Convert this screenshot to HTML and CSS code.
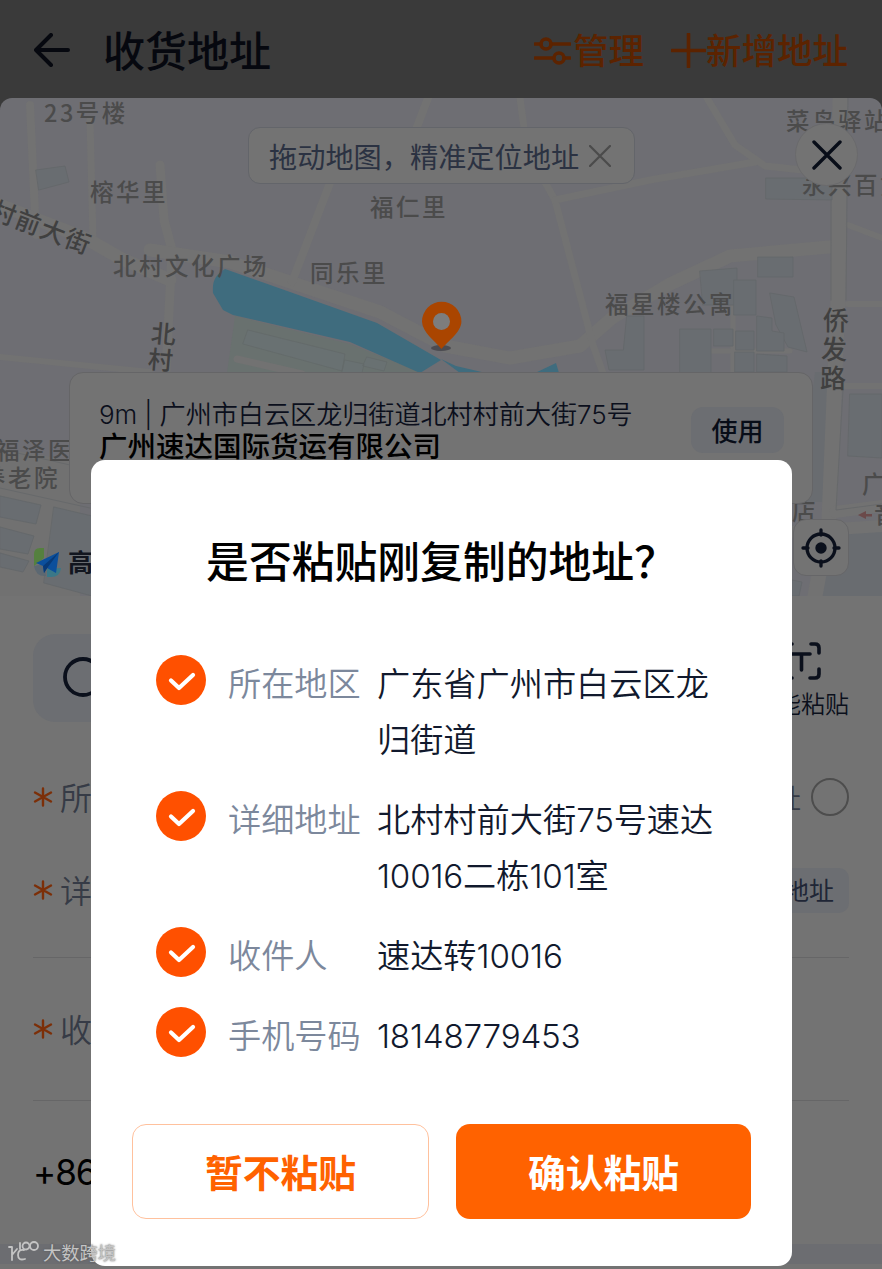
FILE: index.html
```html
<!DOCTYPE html>
<html lang="zh-CN">

<head>
    <meta charset="UTF-8">
    <title>收货地址</title>
    <link rel="stylesheet" href="styles.css">
</head>

<body>
    <div class="page">
        <header class="header">
            <svg class="back" viewBox="0 0 36 34"><path d="M17 2 2 17l15 15M2 17h32"/></svg>
            <h1>收货地址</h1>
            <div class="action">
                <svg class="icon-set" viewBox="0 0 37 30"><path d="M1 8h6M17 8h19M1 22h18M30 22h6"/><circle cx="12" cy="8" r="5"/><circle cx="25" cy="22" r="5"/></svg>
                <span>管理</span>
            </div>
            <div class="action add">
                <svg class="icon-add" viewBox="0 0 35 35"><path d="M17.500 1v33M1 17.500h33"/></svg>
                <span>新增地址</span>
            </div>
        </header>

        <div class="map">
            <svg class="map-bg" viewBox="0 98 882 498">
                <rect class="land" x="0" y="98" width="882" height="498"/>
                <path class="ground" d="M0 448 80 462V596H0z"/>
                <path class="area" d="M815 372h18l-8 130-25 0z M870 525l12-2v73H812l8-50z"/>
                <g class="road">
                    <path d="M30 105 36 235" stroke-width="8"/>
                    <path d="M90 120 93 240" stroke-width="7"/>
                    <path d="M160 165 164 220 172 250 166 372" stroke-width="9"/>
                    <path d="M0 205 85 238 120 258 170 280" stroke-width="13"/>
                    <path d="M150 250 230 262 380 312 445 346 510 358 580 346 612 318 670 284 730 256 840 246" stroke-width="13"/>
                    <path d="M840 98 838 300 829 520 815 596" stroke-width="15"/>
                    <path d="M520 98 527 150 555 200 593 345 604 376" stroke-width="7"/>
                    <path d="M555 200 650 180 755 162M707 98 735 145 765 166 840 174" stroke-width="7"/>
                    <path d="M428 98 412 140M330 183 292 282" stroke-width="8"/>
                    <path d="M0 357 150 372" stroke-width="6"/>
                    <path d="M848 225 882 238M848 304H882M845 386H882" stroke-width="6"/>
                    <path d="M733 300V372M690 351H790" stroke-width="5"/>
                    <path d="M835 512 882 506M790 532 882 526" stroke-width="12"/>
                </g>
                <g class="house">
                    <path d="M36 170 65 166 69 182 39 190z"/>
                    <path d="M766 178h66v22l-66-1z"/>
                    <path d="M758 257h35v20h-35z"/>
                    <path d="M700 271 737 268V305H703z"/>
                    <path d="M734 280h22v35h-22z"/>
                    <path d="M770 293 794 297 807 352 788 347 776 325z"/>
                    <path d="M627 316h17v54h-35l-4-20h18z"/>
                    <path d="M680 329h31v45h-31zM714 329h19v17h-19zM736 331h18v19h-18zM757 316l15 2v13l12 2v18h-27zM735 352h19v20h-19zM757 354l30 2v16h-30z"/>
                    <path d="M850 394h32v64l-34-2z"/>
                    <path d="M0 496 41 505 36 524 0 517zM0 527 34 536 28 554 0 549zM0 553 29 561 23 572 0 567z"/>
                    <path d="M54 507 92 516V596L44 583z"/>
                    <path d="M792 580 802 582 799 596H792z"/>
                </g>
                <path class="edge" d="M848 98 846 300M831 200V300M843 390 836 510 882 504M793 578 M0 488 90 508M0 449 92 470"/>
                <path class="green" d="M235 316 350 344 422 373H227z"/>
                <path class="lot" d="M248 330 345 354 342 371 243 344zM345 360 364 364 362 373H342zM367 357 387 362 384 371 363 366z"/>
                <path class="road" d="M237 359 302 374" stroke-width="7"/>
                <path class="water" d="M225 269C216 275 212 280 213 293L223 310 233 315 350 342 420 373 441 360 377 323 290 292z"/>
                <path class="water" d="M441 359 456 366 486 373H460zM535 373 556 363 559 373z"/>

                <g class="place">
                    <text x="44" y="122">23号楼</text>
                    <text x="90" y="201">榕华里</text>
                    <text x="370" y="216">福仁里</text>
                    <text x="113" y="275">北村文化广场</text>
                    <text x="310" y="282">同乐里</text>
                    <text x="605" y="313">福星楼公寓</text>
                    <text x="786" y="130">菜鸟驿站</text>
                    <text x="802" y="194">永兴百货</text>
                    <text x="-4" y="459">福泽医</text>
                    <text x="-18" y="487">养老院</text>
                    <text x="792" y="520">店</text>
                    <text x="862" y="493">广</text>
                    <text x="874" y="523">音</text>
                </g>
                <g class="street">
                    <text transform="translate(3 213) rotate(21)" x="-12" y="9">村前大街</text>
                    <text x="151" y="343" transform="rotate(5 163 334)">北</text>
                    <text x="148" y="369" transform="rotate(5 160 360)">村</text>
                </g>
                <g class="street big">
                    <text x="823" y="330">侨</text>
                    <text x="821" y="359">发</text>
                    <text x="820" y="388">路</text>
                </g>
                <path class="way" d="M858 515 866 511V514H872V516.500H866V519z"/>

                <ellipse class="pin-shadow" cx="441" cy="348" rx="10" ry="3"/>
                <path class="pin" d="M441.500 349C435 341 422 332 422 321.500A19.700 19.700 0 0 1 461.400 321.500C461.400 332 448 341 441.500 349z"/>
                <circle class="pin-hole" cx="441.500" cy="321.500" r="8.500"/>

                <path class="amap-green" d="M40 548h4v10l-10 8V554q0-6 6-6z"/>
                <path class="amap-grey" d="M34 566 44 564 46 576Q36 577 34 566z"/>
                <path class="amap-cyan" d="M47 569 61 568Q60 577 51 577H47z"/>
                <path class="amap-blue" d="M59 552 36 563 43 566 44 573 47 568 56 573z"/>
                <path class="amap-dark" d="M59 552 43 566 44 573 48 567z"/>
                <text class="amap-name" x="68" y="572">高</text>
            </svg>

            <div class="tip">
                <span>拖动地图，精准定位地址</span>
                <svg viewBox="0 0 22 22"><path d="M1 1 21 21M21 1 1 21"/></svg>
            </div>
            <div class="close">
                <svg viewBox="0 0 30 30"><path d="M2 2 28 28M28 2 2 28"/></svg>
            </div>
            <div class="poi">
                <div class="poi-info">
                    <p class="poi-addr"><span class="num">9m | </span>广州市白云区龙归街道北村村前大街<span class="num">75</span>号</p>
                    <p class="poi-name">广州速达国际货运有限公司</p>
                </div>
                <span class="use">使用</span>
            </div>
            <div class="locate">
                <svg viewBox="0 0 40 40"><circle class="dot" cx="20" cy="20" r="5.700"/><circle cx="20" cy="20" r="14"/><path d="M20 2v5M20 33v5M2 20h5M33 20h5"/></svg>
            </div>
        </div>

        <div class="form">
            <div class="search-row">
                <div class="search">
                    <svg viewBox="0 0 42 42"><circle cx="20" cy="20" r="18"/></svg>
                </div>
                <div class="scan">
                    <svg viewBox="0 0 40 38"><path d="M2 10V6Q2 2 6 2H10M29 2H33Q37 2 37 6V11M37 27V32Q37 36 33 36H28M10 36H6Q2 36 2 32V27M10 12H28M19.500 12V28"/></svg>
                    <span>能粘贴</span>
                </div>
            </div>
            <div class="row region">
                <svg class="star" viewBox="0 0 20 20"><path d="M10 1.500v17M2 5.500l16 9M18 5.500l-16 9"/></svg>
                <label>所</label>
                <span class="default">址</span>
                <i class="radio"></i>
            </div>
            <div class="row detail">
                <svg class="star" viewBox="0 0 20 20"><path d="M10 1.500v17M2 5.500l16 9M18 5.500l-16 9"/></svg>
                <label>详</label>
                <span class="book">地址</span>
            </div>
            <div class="row line">
                <svg class="star" viewBox="0 0 20 20"><path d="M10 1.500v17M2 5.500l16 9M18 5.500l-16 9"/></svg>
                <label>收</label>
            </div>
            <div class="row line">
                <span class="area-code">+86</span>
            </div>
        </div>
        <div class="split"></div>
    </div>

    <div class="dialog">
        <h2>是否粘贴刚复制的地址？</h2>
        <ul class="list">
            <li>
                <svg class="check" viewBox="0 0 50 50"><circle cx="25" cy="25" r="25"/><path d="M15 25.500 23 33 37 20"/></svg>
                <span class="name">所在地区</span>
                <span class="value">广东省广州市白云区龙<br>归街道</span>
            </li>
            <li>
                <svg class="check" viewBox="0 0 50 50"><circle cx="25" cy="25" r="25"/><path d="M15 25.500 23 33 37 20"/></svg>
                <span class="name">详细地址</span>
                <span class="value">北村村前大街<span class="num">75</span>号速达<br><span class="num">10016</span>二栋<span class="num">101</span>室</span>
            </li>
            <li>
                <svg class="check" viewBox="0 0 50 50"><circle cx="25" cy="25" r="25"/><path d="M15 25.500 23 33 37 20"/></svg>
                <span class="name">收件人</span>
                <span class="value">速达转<span class="num">10016</span></span>
            </li>
            <li>
                <svg class="check" viewBox="0 0 50 50"><circle cx="25" cy="25" r="25"/><path d="M15 25.500 23 33 37 20"/></svg>
                <span class="name">手机号码</span>
                <span class="value"><span class="num">18148779453</span></span>
            </li>
        </ul>
        <div class="btns">
            <button class="btn cancel">暂不粘贴</button>
            <button class="btn ok">确认粘贴</button>
        </div>
    </div>

    <div class="mark">
        <svg viewBox="0 0 32 22"><path d="M1 6H4V19M4 14 9 8M16 9Q10 8 10 14Q10 20 17 18M12 2V8"/><circle cx="18" cy="5" r="3.500"/><circle cx="26" cy="5" r="4"/></svg>
        <span>大数跨境</span>
    </div>
</body>

</html>
```

FILE: styles.css
```css
* {
    margin: 0;
    padding: 0;
    box-sizing: border-box;
}

body {
    position: relative;
    height: 1269px;
    overflow: hidden;
    background: #3a3a3a;
    font-family: "Noto Sans CJK SC", sans-serif;
}

svg {
    display: block;
    flex: none;
    fill: none;
    stroke-linecap: round;
    stroke-linejoin: round;
}

.num {
    font-family: Inter, sans-serif;
    line-height: 1;
}

.page {
    height: 1269px;
    display: flex;
    flex-direction: column;
    background: #737373;
}

/* 顶部 */
.header {
    height: 98px;
    flex: none;
    display: flex;
    align-items: center;
    padding: 0 34px 0 34px;
    background: #3a3a3a;
}

.back {
    width: 36px;
    height: 34px;
    margin-top: 2px;
    stroke: #06080f;
    stroke-width: 4;
}

.header h1 {
    margin-left: 33px;
    margin-right: auto;
    font-size: 42px;
    line-height: 60px;
    font-weight: 500;
    color: #06080f;
}

.action {
    display: flex;
    align-items: center;
    font-size: 35.5px;
    line-height: 50px;
    font-weight: 500;
    color: #5c2300;
}

.action svg {
    stroke: #5c2300;
    stroke-width: 3.6;
}

.add {
    margin-left: 27px;
}

.icon-set {
    width: 37px;
    height: 30px;
    margin-top: 3px;
    margin-right: 2px;
}

.icon-add {
    width: 35px;
    height: 35px;
    margin-top: 3px;
}

/* 地图 */
.map {
    position: relative;
    height: 498px;
    flex: none;
    background: #3a3a3a;
}

.map-bg {
    width: 882px;
    height: 498px;
    border-radius: 12px 12px 0 0;
}

.land { fill: #6e6e73; }
.ground { fill: #717171; }
.area { fill: #696c70; }
.road { stroke: #727272; }

.house {
    fill: #696d71;
    stroke: #63676a;
    stroke-width: .8;
}

.lot {
    fill: #697172;
    stroke: #636a69;
    stroke-width: .8;
}

.edge {
    stroke: #67696b;
    stroke-width: 1;
}

.green { fill: #69716f; }
.water { fill: #3f6c7e; }

.place {
    fill: #4b4b4b;
    font-size: 23.5px;
    font-weight: 500;
    letter-spacing: 2.5px;
}

.street {
    fill: #404040;
    font-size: 25px;
    font-weight: 500;
    letter-spacing: 1.5px;
}

.big { font-size: 26px; }
.way { fill: #6b4a4a; }
.pin { fill: #aa4500; }
.pin-hole { fill: #7d7d7d; }
.pin-shadow { fill: #4b4b50; }
.amap-green { fill: #55803f; }
.amap-grey { fill: #5c6872; }
.amap-cyan { fill: #3a7888; }
.amap-blue { fill: #0b4f9c; }
.amap-dark { fill: #083a78; }

.amap-name {
    fill: #12161f;
    font-size: 25px;
    font-weight: 700;
}

.tip {
    position: absolute;
    left: 248px;
    top: 29px;
    width: 387px;
    height: 57px;
    display: flex;
    align-items: center;
    justify-content: space-between;
    padding: 0 23px 0 20px;
    border: 1px solid #63656a;
    border-radius: 12px;
    background: #737373;
    color: #2b3242;
    font-size: 28.2px;
    white-space: nowrap;
}

.tip svg {
    width: 22px;
    height: 22px;
    stroke: #4b4b4b;
    stroke-width: 2.2;
}

.close {
    position: absolute;
    right: 24px;
    top: 25px;
    width: 63px;
    height: 63px;
    display: flex;
    align-items: center;
    justify-content: center;
    border: 1px solid #6a6a6c;
    border-radius: 50%;
    background: #737373;
}

.close svg {
    width: 30px;
    height: 30px;
    stroke: #080d18;
    stroke-width: 3.4;
}

.poi {
    position: absolute;
    left: 69px;
    top: 274px;
    width: 744px;
    height: 132px;
    display: flex;
    padding: 22px 28px 0 29px;
    border: 1px solid #656567;
    border-radius: 14px;
    background: #737373;
}

.poi-info {
    flex: 1;
    white-space: nowrap;
}

.poi-addr {
    font-size: 26.1px;
    line-height: 36px;
    font-weight: 350;
    color: #0b0f1c;
}

.poi-addr .num {
    letter-spacing: -.1px;
    font-size: 26px;
    font-weight: 300;
}

.poi-name {
    font-size: 28.5px;
    line-height: 28px;
    font-weight: 500;
    color: #000;
}

.use {
    width: 93px;
    height: 46px;
    margin-top: 12px;
    border-radius: 12px;
    background: #6c6e72;
    font-size: 26px;
    line-height: 46px;
    font-weight: 500;
    text-align: center;
    color: #080d18;
}

.locate {
    position: absolute;
    right: 33px;
    bottom: 20px;
    width: 56px;
    height: 57px;
    display: flex;
    align-items: center;
    justify-content: center;
    border: 1px solid #666668;
    border-radius: 13px;
    background: #737373;
}

.locate svg {
    width: 40px;
    height: 40px;
    stroke: #0b101c;
    stroke-width: 3.3;
}

.locate .dot {
    fill: #0b101c;
    stroke: none;
}

/* 表单 */
.form {
    flex: none;
    padding: 38px 33px 0;
}

.search-row {
    height: 88px;
    margin-bottom: 37px;
    display: flex;
    justify-content: space-between;
}

.search {
    width: 680px;
    padding: 23px 0 0 30px;
    border-radius: 22px;
    background: #6c6e72;
}

.search svg {
    width: 42px;
    height: 42px;
    stroke: #0b101c;
    stroke-width: 3.8;
}

.scan {
    padding-top: 8px;
    display: flex;
    flex-direction: column;
    align-items: flex-end;
    font-size: 24px;
    line-height: 34px;
    font-weight: 350;
    color: #0b101c;
}

.scan svg {
    width: 40px;
    height: 38px;
    margin: 0 27px 6px 0;
    stroke: #0b101c;
    stroke-width: 3.6;
}

.row {
    display: flex;
    align-items: center;
    font-size: 32px;
    color: #363b46;
}

.row label {
    margin-left: 7px;
    margin-bottom: 3px;
    font-weight: 350;
}

.star {
    width: 20px;
    height: 20px;
    stroke: #7c2f08;
    stroke-width: 2.4;
}

.region { height: 76px; }

.detail {
    height: 110px;
    margin-bottom: 12px;
}

.line {
    height: 143px;
    border-top: 1px solid #666667;
}

.default {
    margin-left: auto;
    font-size: 27px;
    font-weight: 350;
}

.radio {
    width: 38px;
    height: 38px;
    margin-left: 10px;
    border: 2px solid #4d4d4d;
    border-radius: 50%;
}

.book {
    width: 120px;
    height: 45px;
    margin-left: auto;
    padding-right: 15px;
    border-radius: 10px;
    background: #6c6e72;
    font-size: 25px;
    line-height: 42px;
    text-align: right;
    color: #202636;
}

.area-code {
    font-family: Inter, sans-serif;
    font-size: 35px;
    letter-spacing: -1px;
    color: #000;
}

.split {
    height: 20px;
    margin-top: 1px;
    background: #6c6d71;
}

/* 弹窗 */
.dialog {
    position: absolute;
    left: 91px;
    top: 460px;
    width: 701px;
    height: 806px;
    padding: 69px 41px 0;
    border-radius: 14px;
    background: #fff;
}

.dialog h2 {
    font-size: 42.8px;
    line-height: 60px;
    font-weight: 500;
    text-align: center;
    white-space: nowrap;
    color: #000;
}

.list {
    display: flex;
    flex-direction: column;
    gap: 24px;
    margin: 65px 0 0 24px;
    list-style: none;
}

.list li {
    display: flex;
    font-size: 33.2px;
    line-height: 56px;
    font-weight: 350;
    white-space: nowrap;
}

.check {
    width: 50px;
    height: 50px;
    margin-top: 1px;
    margin-right: 22px;
}

.check circle { fill: #ff5000; }

.check path {
    stroke: #fff;
    stroke-width: 4.2;
}

.name {
    width: 149px;
    color: #7c889c;
}

.value {
    color: #11192d;
}

.value .num {
    letter-spacing: -.2px;
    font-weight: 300;
}

.btns {
    display: flex;
    gap: 27px;
    margin-top: 62px;
}

.btn {
    flex: 1;
    height: 95px;
    padding-bottom: 3px;
    border: 0;
    border-radius: 14px;
    font-family: inherit;
    font-size: 37.8px;
    font-weight: 700;
}

.cancel {
    border: 1px solid #ffc19d;
    background: #fff;
    color: #ff6200;
}

.ok {
    background: #ff6200;
    color: #fff;
}

/* 水印 */
.mark {
    position: absolute;
    left: 8px;
    bottom: 4px;
    display: flex;
    align-items: center;
    gap: 3px;
    font-size: 18.3px;
    line-height: 26px;
    color: #c4c4c4;
    text-shadow: 0 0 2px #555;
}

.mark svg {
    width: 32px;
    height: 22px;
    stroke: #c4c4c4;
    stroke-width: 1.8;
}
```
